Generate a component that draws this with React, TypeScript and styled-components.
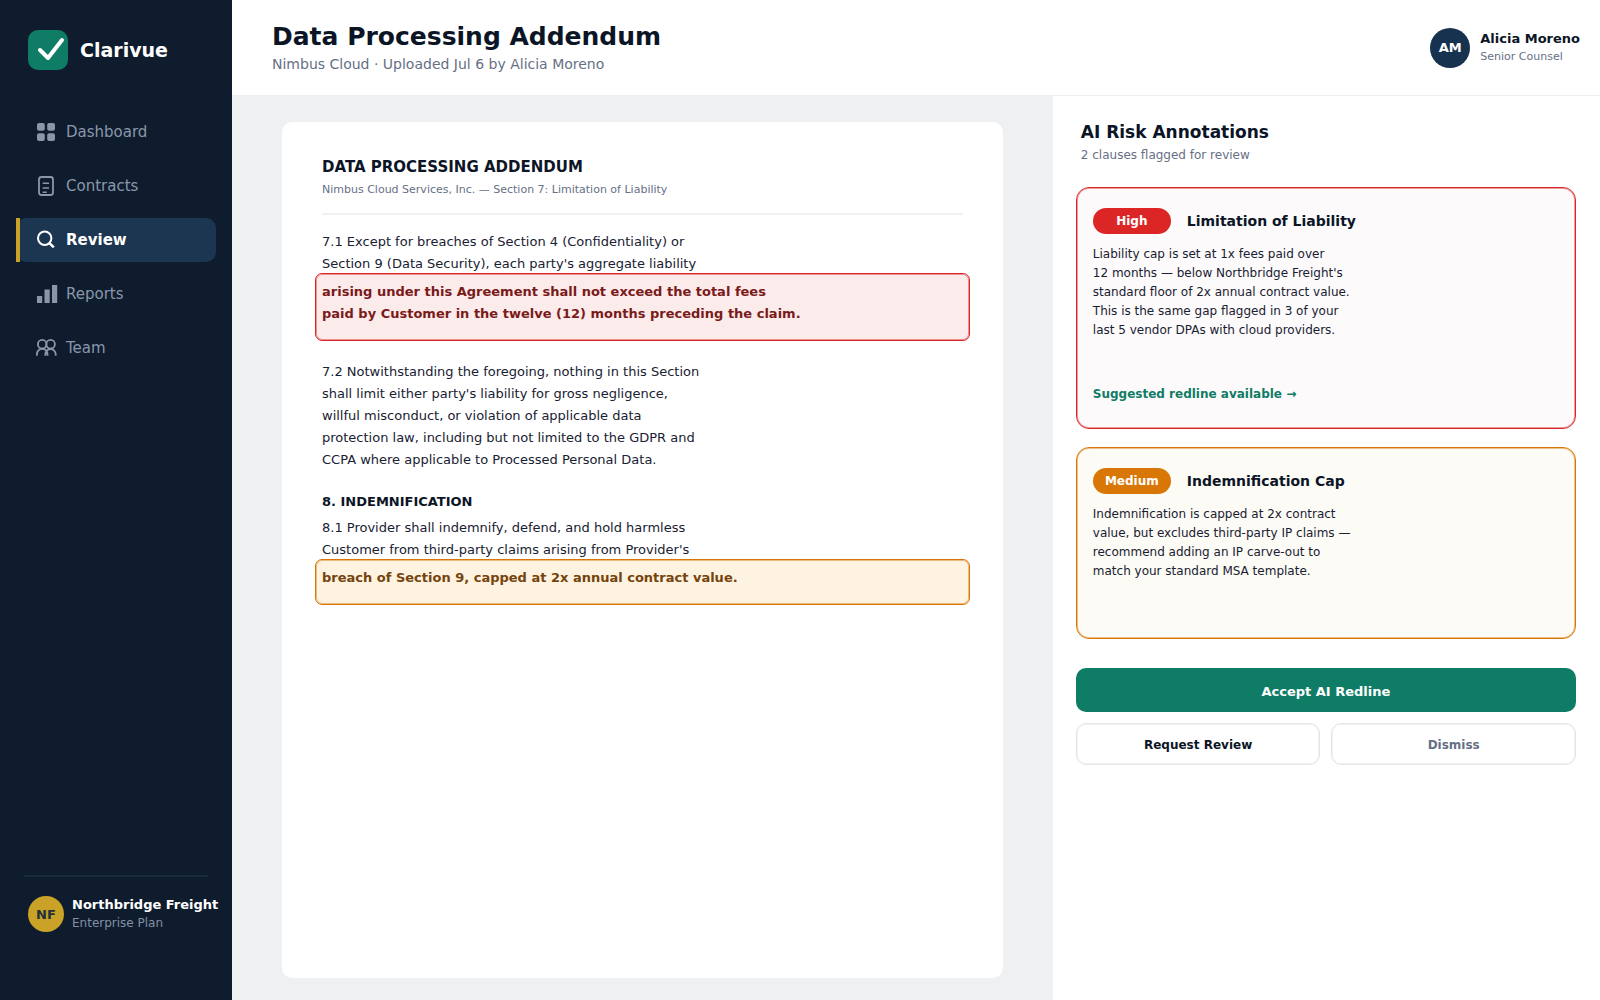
import React from "react";
import styled, { createGlobalStyle } from "styled-components";

const GlobalStyle = createGlobalStyle`
  *, *::before, *::after { box-sizing: border-box; }
  body {
    margin: 0;
    background: #eff0f2;
    color: #0b1526;
    font-family: "DejaVu Sans", Verdana, sans-serif;
  }
  h1, h2, h3, h4, p { margin: 0; }
  button { font-family: inherit; cursor: pointer; }
`;

const Shell = styled.div`
  display: grid;
  grid-template-columns: 232px 1fr;
  min-height: 100vh;
`;

const Sidebar = styled.aside`
  display: flex;
  flex-direction: column;
  background: #0f1c2d;
  padding: 30px 16px 68px;
`;

const Brand = styled.div`
  display: flex;
  align-items: center;
  gap: 12px;
  padding-left: 12px;
  color: #fff;
  font-size: 19px;
  font-weight: 700;
`;

const Nav = styled.nav`
  display: flex;
  flex-direction: column;
  gap: 10px;
  margin-top: 40px;
`;

const NavLink = styled.a<{ $active?: boolean }>`
  position: relative;
  display: flex;
  align-items: center;
  gap: 8px;
  height: 44px;
  padding-left: 20px;
  border-radius: 10px;
  font-size: 15px;
  text-decoration: none;
  font-weight: ${(p) => (p.$active ? 700 : 400)};
  color: ${(p) => (p.$active ? "#fff" : "#8a97ab")};
  background: ${(p) => (p.$active ? "#1c3550" : "transparent")};

  &::before {
    content: "";
    display: ${(p) => (p.$active ? "block" : "none")};
    position: absolute;
    inset: 0 auto 0 0;
    width: 4px;
    background: #c9a227;
  }
`;

const AccountArea = styled.div`
  margin-top: auto;
`;

const Account = styled.div`
  display: flex;
  align-items: center;
  gap: 8px;
  padding-left: 12px;
`;

const Divider = styled.hr`
  margin: 0 8px 19px;
  border: 0;
  border-top: 2px solid #1a293b;
`;

const Avatar = styled.span<{ $size: number; $bg: string; $fg: string }>`
  display: flex;
  flex: none;
  align-items: center;
  justify-content: center;
  width: ${(p) => p.$size}px;
  height: ${(p) => p.$size}px;
  border-radius: 50%;
  background: ${(p) => p.$bg};
  color: ${(p) => p.$fg};
  font-size: 13px;
  font-weight: 700;
`;

const Person = styled.div`
  display: flex;
  flex-direction: column;
  white-space: nowrap;
`;

const PersonName = styled.span<{ $light?: boolean }>`
  font-size: 13px;
  line-height: 18px;
  font-weight: 700;
  color: ${(p) => (p.$light ? "#fff" : "#0b1526")};
`;

const PersonRole = styled.span<{ $light?: boolean }>`
  font-size: ${(p) => (p.$light ? 12 : 11)}px;
  line-height: 18px;
  color: ${(p) => (p.$light ? "#8190a5" : "#667085")};
`;

const Page = styled.div`
  display: flex;
  flex-direction: column;
  min-width: 0;
`;

const Header = styled.header`
  display: flex;
  align-items: center;
  justify-content: space-between;
  height: 96px;
  padding: 0 20px 0 40px;
  background: #fff;
  border-bottom: 1px solid #eeeff2;
`;

const PageTitle = styled.h1`
  font-size: 25px;
  line-height: 32px;
  font-weight: 700;
`;

const PageMeta = styled.p`
  font-size: 14px;
  line-height: 22px;
  color: #667085;
`;

const User = styled.div`
  display: flex;
  align-items: center;
  gap: 10px;
`;

const Workspace = styled.main`
  display: grid;
  grid-template-columns: 3fr 2fr;
  flex: 1;
`;

const DocumentPane = styled.section`
  display: flex;
  padding: 26px 50px 22px;
`;

const Sheet = styled.article`
  flex: 1;
  padding: 33px 40px;
  border-radius: 10px;
  background: #fff;
`;

const SheetHeader = styled.header`
  padding-bottom: 12px;
  margin-bottom: 16px;
  border-bottom: 2px solid #eef0f4;
`;

const SheetTitle = styled.h2`
  font-size: 15px;
  line-height: 24px;
`;

const SheetMeta = styled.p`
  font-size: 11px;
  line-height: 22px;
  color: #667085;
`;

const Clause = styled.p`
  font-size: 13px;
  line-height: 22px;
  color: #182131;
`;

const ClauseHeading = styled.h3`
  margin: 20px 0 4px;
  font-size: 13px;
  line-height: 22px;
`;

const tones = {
  high: { line: "#dc2626", soft: "rgba(220, 38, 38, 0.45)", fill: "#fcebeb", card: "#fdfafb", ink: "#7a1a1a" },
  medium: { line: "#d97706", soft: "rgba(217, 119, 6, 0.45)", fill: "#fef3e0", card: "#fdfbf6", ink: "#75430d" },
};
type Tone = keyof typeof tones;

const Flagged = styled.mark<{ $tone: Tone }>`
  display: block;
  margin: -2px -7px 20px;
  padding: 7px 6px 15px;
  border: 1px solid ${(p) => tones[p.$tone].line};
  box-shadow: inset 0 0 0 1px ${(p) => tones[p.$tone].soft};
  border-radius: 7px;
  background: ${(p) => tones[p.$tone].fill};
  color: ${(p) => tones[p.$tone].ink};
  font-size: 13px;
  line-height: 22px;
  font-weight: 700;
`;

const Panel = styled.aside`
  display: flex;
  flex-direction: column;
  padding: 24px 24px 32px 23px;
  background: #fff;
`;

const PanelHeader = styled.header`
  padding: 0 5px;
  margin-bottom: 20px;
`;

const PanelTitle = styled.h2`
  font-size: 17px;
  line-height: 24px;
`;

const PanelMeta = styled.p`
  font-size: 12px;
  line-height: 23px;
  color: #667085;
`;

const Risk = styled.article<{ $tone: Tone }>`
  display: flex;
  flex-direction: column;
  min-height: ${(p) => (p.$tone === "high" ? 242 : 192)}px;
  margin-bottom: 18px;
  padding: 20px 16px 24px;
  border: 1px solid ${(p) => tones[p.$tone].line};
  box-shadow: inset 0 0 0 1px ${(p) => tones[p.$tone].soft};
  border-radius: 13px;
  background: ${(p) => tones[p.$tone].card};
`;

const RiskHead = styled.div`
  display: flex;
  align-items: center;
  gap: 16px;
  margin-bottom: 11px;
`;

const Badge = styled.span<{ $tone: Tone }>`
  width: 78px;
  border-radius: 13px;
  background: ${(p) => tones[p.$tone].line};
  color: #fff;
  font-size: 12px;
  line-height: 26px;
  font-weight: 700;
  text-align: center;
`;

const RiskTitle = styled.h3`
  font-size: 14px;
  line-height: 26px;
`;

const RiskText = styled.p`
  font-size: 12px;
  line-height: 19px;
  color: #182131;
`;

const RedlineLink = styled.a`
  margin-top: auto;
  font-size: 12px;
  line-height: 19px;
  font-weight: 700;
  color: #0f7c66;
  text-decoration: none;
`;

const Actions = styled.div`
  display: grid;
  grid-template-columns: 1fr 1fr;
  gap: 11px;
  margin-top: 11px;
`;

const PrimaryButton = styled.button`
  grid-column: 1 / -1;
  height: 44px;
  padding-top: 3px;
  border: 0;
  border-radius: 10px;
  background: #0f7c66;
  color: #fff;
  font-size: 13px;
  font-weight: 700;
`;

const SecondaryButton = styled.button<{ $muted?: boolean }>`
  height: 42px;
  padding-top: 3px;
  border: 1px solid #e2e5ea;
  box-shadow: inset 0 0 0 1px #f0f2f4;
  border-radius: 10px;
  background: #fff;
  color: ${(p) => (p.$muted ? "#667085" : "#0b1526")};
  font-size: 12px;
  font-weight: 700;
`;

const LogoMark = () => (
  <svg width="40" height="40" viewBox="0 0 40 40" aria-hidden="true">
    <rect width="40" height="40" rx="10" fill="#0f7c66" />
    <path d="M12 20l8 8L34 10" fill="none" stroke="#fff" strokeWidth="4" strokeLinecap="round" strokeLinejoin="round" />
  </svg>
);

const NavIcon = ({ children }: { children: React.ReactNode }) => (
  <svg width="22" height="22" viewBox="0 0 22 22" fill="none" stroke="currentColor" aria-hidden="true">
    {children}
  </svg>
);

const items = [
  {
    label: "Dashboard",
    icon: (
      <g fill="currentColor" stroke="none">
        <rect x="1" y="2" width="7.8" height="7.8" rx="2" />
        <rect x="11.2" y="2" width="7.8" height="7.8" rx="2" />
        <rect x="1" y="12.2" width="7.8" height="7.8" rx="2" />
        <rect x="11.2" y="12.2" width="7.8" height="7.8" rx="2" />
      </g>
    ),
  },
  {
    label: "Contracts",
    icon: (
      <g strokeWidth="1.8">
        <rect x="3" y="2" width="14" height="18" rx="2.5" />
        <path d="M6.7 8.2h6.3M6.7 13h6.3M6.7 17.3h4" strokeWidth="1.6" />
      </g>
    ),
  },
  {
    label: "Review",
    active: true,
    icon: (
      <g strokeWidth="2">
        <circle cx="8.7" cy="9.2" r="6.7" />
        <path d="M13.2 13.8l4.6 4.6" strokeWidth="2.6" />
      </g>
    ),
  },
  {
    label: "Reports",
    icon: (
      <g fill="currentColor" stroke="none">
        <rect x="1" y="13" width="5.2" height="7" />
        <rect x="8.5" y="6.5" width="5.2" height="13.5" />
        <rect x="16" y="2" width="5.2" height="18" />
      </g>
    ),
  },
  {
    label: "Team",
    icon: (
      <g strokeWidth="1.8">
        <circle cx="6.2" cy="7.2" r="4.3" />
        <circle cx="14.6" cy="7.2" r="4.3" />
        <path d="M.9 18.8v-1.6a5.2 5.2 0 0 1 10.6 0v1.6M9.3 18.8v-1.6a5.2 5.2 0 0 1 10.4 0v1.6" />
      </g>
    ),
  },
];

export default function App() {
  return (
    <>
      <GlobalStyle />
      <Shell>
        <Sidebar>
          <Brand>
            <LogoMark />
            Clarivue
          </Brand>
          <Nav aria-label="Main">
            {items.map((item) => (
              <NavLink key={item.label} href="#" $active={item.active} aria-current={item.active ? "page" : undefined}>
                <NavIcon>{item.icon}</NavIcon>
                {item.label}
              </NavLink>
            ))}
          </Nav>
          <AccountArea>
            <Divider />
            <Account>
              <Avatar $size={36} $bg="#c9a227" $fg="#22303a">NF</Avatar>
              <Person>
                <PersonName $light>Northbridge Freight</PersonName>
                <PersonRole $light>Enterprise Plan</PersonRole>
              </Person>
            </Account>
          </AccountArea>
        </Sidebar>

        <Page>
          <Header>
            <div>
              <PageTitle>Data Processing Addendum</PageTitle>
              <PageMeta>Nimbus Cloud · Uploaded Jul 6 by Alicia Moreno</PageMeta>
            </div>
            <User>
              <Avatar $size={40} $bg="#17324f" $fg="#fff">AM</Avatar>
              <Person>
                <PersonName>Alicia Moreno</PersonName>
                <PersonRole>Senior Counsel</PersonRole>
              </Person>
            </User>
          </Header>

          <Workspace>
            <DocumentPane>
              <Sheet>
                <SheetHeader>
                  <SheetTitle>DATA PROCESSING ADDENDUM</SheetTitle>
                  <SheetMeta>Nimbus Cloud Services, Inc. — Section 7: Limitation of Liability</SheetMeta>
                </SheetHeader>
                <Clause>
                  7.1 Except for breaches of Section 4 (Confidentiality) or
                  <br />
                  Section 9 (Data Security), each party's aggregate liability
                </Clause>
                <Flagged $tone="high">
                  arising under this Agreement shall not exceed the total fees
                  <br />
                  paid by Customer in the twelve (12) months preceding the claim.
                </Flagged>
                <Clause>
                  7.2 Notwithstanding the foregoing, nothing in this Section
                  <br />
                  shall limit either party's liability for gross negligence,
                  <br />
                  willful misconduct, or violation of applicable data
                  <br />
                  protection law, including but not limited to the GDPR and
                  <br />
                  CCPA where applicable to Processed Personal Data.
                </Clause>
                <ClauseHeading>8. INDEMNIFICATION</ClauseHeading>
                <Clause>
                  8.1 Provider shall indemnify, defend, and hold harmless
                  <br />
                  Customer from third-party claims arising from Provider's
                </Clause>
                <Flagged $tone="medium">breach of Section 9, capped at 2x annual contract value.</Flagged>
              </Sheet>
            </DocumentPane>

            <Panel>
              <PanelHeader>
                <PanelTitle>AI Risk Annotations</PanelTitle>
                <PanelMeta>2 clauses flagged for review</PanelMeta>
              </PanelHeader>
              <Risk $tone="high">
                <RiskHead>
                  <Badge $tone="high">High</Badge>
                  <RiskTitle>Limitation of Liability</RiskTitle>
                </RiskHead>
                <RiskText>
                  Liability cap is set at 1x fees paid over
                  <br />
                  12 months — below Northbridge Freight's
                  <br />
                  standard floor of 2x annual contract value.
                  <br />
                  This is the same gap flagged in 3 of your
                  <br />
                  last 5 vendor DPAs with cloud providers.
                </RiskText>
                <RedlineLink href="#">Suggested redline available →</RedlineLink>
              </Risk>
              <Risk $tone="medium">
                <RiskHead>
                  <Badge $tone="medium">Medium</Badge>
                  <RiskTitle>Indemnification Cap</RiskTitle>
                </RiskHead>
                <RiskText>
                  Indemnification is capped at 2x contract
                  <br />
                  value, but excludes third-party IP claims —
                  <br />
                  recommend adding an IP carve-out to
                  <br />
                  match your standard MSA template.
                </RiskText>
              </Risk>
              <Actions>
                <PrimaryButton type="button">Accept AI Redline</PrimaryButton>
                <SecondaryButton type="button">Request Review</SecondaryButton>
                <SecondaryButton type="button" $muted>
                  Dismiss
                </SecondaryButton>
              </Actions>
            </Panel>
          </Workspace>
        </Page>
      </Shell>
    </>
  );
}
